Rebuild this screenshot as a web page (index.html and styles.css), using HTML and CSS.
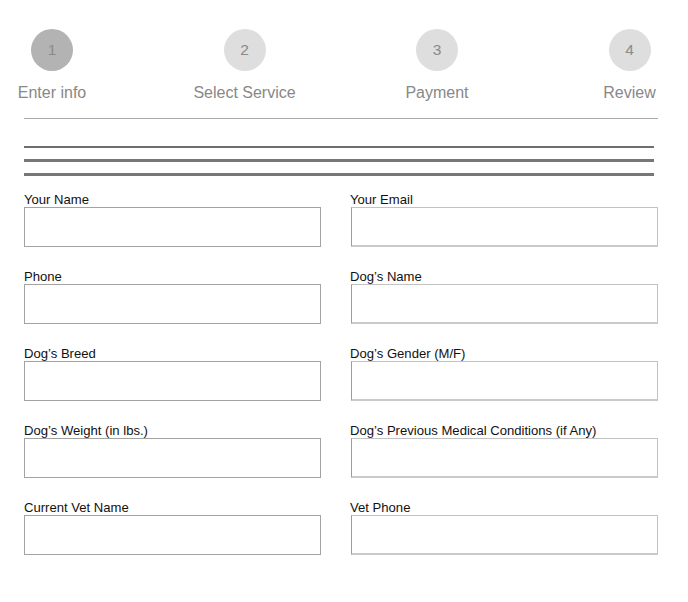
FILE: index.html
```html
<!DOCTYPE html>
<html>
<head>
<meta charset="utf-8">
<link rel="stylesheet" href="styles.css">
</head>
<body>
<div class="page">
  <div class="stepper">
    <div class="step active"><div class="circle">1</div><div class="step-label">Enter info</div></div>
    <div class="step"><div class="circle">2</div><div class="step-label">Select Service</div></div>
    <div class="step"><div class="circle">3</div><div class="step-label">Payment</div></div>
    <div class="step"><div class="circle">4</div><div class="step-label">Review</div></div>
  </div>
  <div class="divider"></div>
  <div class="bars">
    <div class="bar thin"></div>
    <div class="bar"></div>
    <div class="bar"></div>
  </div>
  <form class="form">
    <div class="field"><label>Your Name</label><div class="input"></div></div>
    <div class="field right"><label>Your Email</label><div class="input"></div></div>
    <div class="field"><label>Phone</label><div class="input"></div></div>
    <div class="field right"><label>Dog’s Name</label><div class="input"></div></div>
    <div class="field"><label>Dog’s Breed</label><div class="input"></div></div>
    <div class="field right"><label>Dog’s Gender (M/F)</label><div class="input"></div></div>
    <div class="field"><label>Dog’s Weight (in lbs.)</label><div class="input"></div></div>
    <div class="field right"><label>Dog’s Previous Medical Conditions (if Any)</label><div class="input"></div></div>
    <div class="field"><label>Current Vet Name</label><div class="input"></div></div>
    <div class="field right"><label>Vet Phone</label><div class="input"></div></div>
  </form>
</div>
</body>
</html>
```
FILE: styles.css
```css
html, body {
  margin: 0;
  padding: 0;
  background: #fff;
  font-family: "Liberation Sans", Arial, sans-serif;
}
.page {
  padding: 29px 0 0 24px;
  width: 634px;
}
.stepper {
  display: flex;
  gap: 92.5px;
  margin-left: -22px;
}
.step {
  flex: none;
  width: 100px;
  display: flex;
  flex-direction: column;
  align-items: center;
}
.circle {
  width: 42px;
  height: 42px;
  border-radius: 50%;
  background: #dedede;
  color: #8a8a8a;
  font-size: 15.5px;
  display: flex;
  align-items: center;
  justify-content: center;
}
.step.active .circle {
  background: #b3b3b3;
}
.step-label {
  margin-top: 13px;
  font-size: 16px;
  line-height: 18px;
  color: #888;
  white-space: nowrap;
}
.divider {
  margin-top: 16px;
  height: 1px;
  background: #a8a8a8;
}
.bars {
  margin-top: 27px;
  width: 630px;
  display: flex;
  flex-direction: column;
  gap: 11px;
}
.bar {
  height: 3px;
  background: #777;
}
.bar.thin {
  height: 2px;
  background: #6e6e6e;
}
.form {
  margin-top: 16px;
  display: grid;
  grid-template-columns: 297px 307px;
  column-gap: 30px;
  row-gap: 22px;
}
.field label {
  display: block;
  font-size: 13.1px;
  line-height: 15px;
  color: #111;
  white-space: nowrap;
}
.field.right label {
  margin-left: -1px;
}
.input {
  box-sizing: border-box;
  height: 40px;
  border: 1px solid #a3a3a3;
  background: #fff;
}
.field.right .input {
  border: 1px solid #c2c2c2;
  border-left-color: #9c9c9c;
  border-bottom: 2px solid #cacaca;
}
```
